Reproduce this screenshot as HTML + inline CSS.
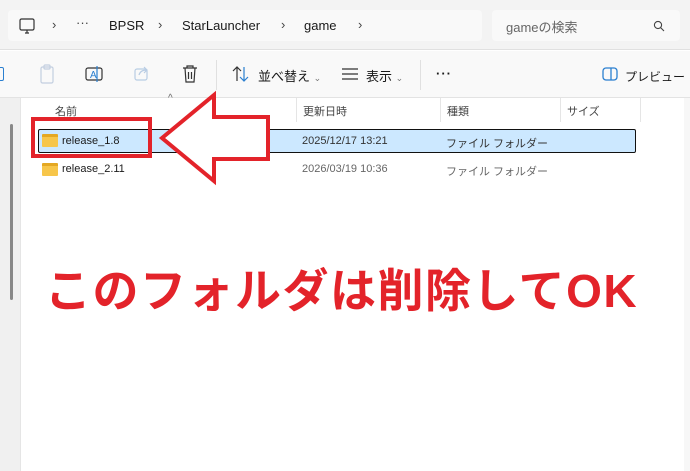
<!DOCTYPE html>
<html><head><meta charset="utf-8"><style>
*{margin:0;padding:0;box-sizing:border-box}
body{width:690px;height:471px;overflow:hidden;background:#fff;font-family:"Liberation Sans","Noto Sans CJK JP",sans-serif;position:relative;color:#1a1a1a}
.abs{position:absolute}
.top{left:0;top:0;width:690px;height:50px;background:#f3f3f3;border-bottom:1px solid #e0e0e0}
.addr{left:8px;top:10px;width:474px;height:31px;background:#f9f9f9;border-radius:4px}
.srch{left:492px;top:10px;width:188px;height:31px;background:#f9f9f9;border-radius:4px}
.tb{left:0;top:51px;width:690px;height:47px;background:#f9f9f9;border-bottom:1px solid #e3e3e3}
.t{font-size:13px;white-space:nowrap}
.s{font-size:11px;white-space:nowrap}
</style></head><body>
<div class="abs top"></div>
<div class="abs addr"></div>
<div class="abs srch"></div>
<svg class="abs" style="left:18px;top:17px" width="18" height="18" viewBox="0 0 18 18" fill="none" stroke="#333" stroke-width="1.2"><rect x="2" y="2" width="14" height="11" rx="1.5"/><path d="M7 16h4M9 13v3"/></svg>
<div class="abs t" style="left:52px;top:17px;color:#444">›</div>
<div class="abs t" style="left:76px;top:15px;color:#444">···</div>
<div class="abs t" style="left:109px;top:18px">BPSR</div>
<div class="abs t" style="left:158px;top:17px;color:#444">›</div>
<div class="abs t" style="left:182px;top:18px">StarLauncher</div>
<div class="abs t" style="left:281px;top:17px;color:#444">›</div>
<div class="abs t" style="left:304px;top:18px">game</div>
<div class="abs t" style="left:358px;top:17px;color:#444">›</div>
<div class="abs t" style="left:506px;top:17px;color:#666">gameの検索</div>
<svg class="abs" style="left:653px;top:20px" width="12" height="12" viewBox="0 0 12 12" fill="none" stroke="#444" stroke-width="1.1"><circle cx="5" cy="5" r="3.6"/><path d="M7.6 7.6L11 11"/></svg>

<div class="abs tb"></div>
<div class="abs" style="left:-6px;top:67px;width:10px;height:14px;border:1.5px solid #2a7fd0;border-radius:2px"></div>
<svg class="abs" style="left:38px;top:64px" width="18" height="20" viewBox="0 0 18 20" fill="none" stroke="#c3cfe0" stroke-width="1.2"><rect x="3" y="3" width="12" height="16" rx="1.5"/><rect x="6" y="1" width="6" height="4" rx="1"/></svg>
<svg class="abs" style="left:84px;top:64px" width="20" height="20" viewBox="0 0 20 20" fill="none" stroke="#333" stroke-width="1.2"><rect x="2" y="4" width="16" height="12" rx="2"/><text x="6" y="14" font-size="10" fill="#2a7fd0" stroke="none" font-family="Liberation Sans">A</text><path d="M13 2v16" stroke="#2a7fd0"/></svg>
<svg class="abs" style="left:133px;top:64px" width="18" height="18" viewBox="0 0 18 18" fill="none" stroke="#b9cde4" stroke-width="1.2"><rect x="2" y="5" width="12" height="11" rx="2"/><path d="M6 11c1-4 4-5 8-5M11 3l3 3-3 3"/></svg>
<svg class="abs" style="left:181px;top:64px" width="18" height="20" viewBox="0 0 18 20" fill="none" stroke="#333" stroke-width="1.2"><path d="M2 4h14M6 4V2h6v2M4 4l1 14h8l1-14M7.5 8v7M10.5 8v7"/></svg>
<div class="abs" style="left:216px;top:60px;width:1px;height:30px;background:#e0e0e0"></div>
<svg class="abs" style="left:232px;top:66px" width="18" height="16" viewBox="0 0 18 16" fill="none" stroke="#333" stroke-width="1.2"><path d="M5 15V1M1 5l4-4 4 4"/><path d="M12 1v14M8 11l4 4 4-4" stroke="#2a7fd0"/></svg>
<div class="abs t" style="left:258px;top:66px">並べ替え <span style="font-size:9px;color:#777">⌄</span></div>
<svg class="abs" style="left:342px;top:68px" width="16" height="12" viewBox="0 0 16 12" stroke="#333" stroke-width="1.2"><path d="M0 1h16M0 6h16M0 11h16"/></svg>
<div class="abs t" style="left:366px;top:66px">表示 <span style="font-size:9px;color:#777">⌄</span></div>
<div class="abs" style="left:420px;top:60px;width:1px;height:30px;background:#e0e0e0"></div>
<div class="abs t" style="left:436px;top:66px;font-weight:bold;letter-spacing:1px">···</div>
<svg class="abs" style="left:602px;top:66px" width="16" height="16" viewBox="0 0 16 16" fill="none" stroke="#2a7fd0" stroke-width="1.3"><rect x="1" y="2" width="14" height="12" rx="3"/><path d="M9 2v12"/></svg>
<div class="abs s" style="left:625px;top:68px;font-size:12px">プレビュー</div>

<div class="abs" style="left:0;top:98px;width:21px;height:373px;background:#f0f0f0;border-right:1px solid #e5e5e5"></div>
<div class="abs" style="left:10px;top:124px;width:3px;height:176px;background:#888;border-radius:2px"></div>
<div class="abs" style="left:684px;top:98px;width:6px;height:373px;background:#f7f7f7"></div>

<div class="abs s" style="left:55px;top:103px;color:#444">名前</div>
<div class="abs s" style="left:168px;top:93px;color:#666;font-size:10px">^</div>
<div class="abs" style="left:296px;top:98px;width:1px;height:24px;background:#e5e5e5"></div>
<div class="abs s" style="left:303px;top:103px;color:#444">更新日時</div>
<div class="abs" style="left:440px;top:98px;width:1px;height:24px;background:#e5e5e5"></div>
<div class="abs s" style="left:447px;top:103px;color:#444">種類</div>
<div class="abs" style="left:560px;top:98px;width:1px;height:24px;background:#e5e5e5"></div>
<div class="abs s" style="left:567px;top:103px;color:#444">サイズ</div>
<div class="abs" style="left:640px;top:98px;width:1px;height:24px;background:#e5e5e5"></div>

<div class="abs" style="left:38px;top:129px;width:598px;height:24px;background:#cce8ff;border:1px solid #111;border-radius:2px"></div>
<div class="abs" style="left:42px;top:134px;width:16px;height:13px;background:#f7c64a;border-radius:1px;border-top:3px solid #e4a823"></div>
<div class="abs s" style="left:62px;top:135px">release_1.8</div>
<div class="abs s" style="left:302px;top:135px;color:#333">2025/12/17 13:21</div>
<div class="abs s" style="left:446px;top:135px;color:#333">ファイル フォルダー</div>
<div class="abs" style="left:42px;top:163px;width:16px;height:13px;background:#f7c64a;border-radius:1px;border-top:3px solid #e4a823"></div>
<div class="abs s" style="left:62px;top:163px">release_2.11</div>
<div class="abs s" style="left:302px;top:163px;color:#666">2026/03/19 10:36</div>
<div class="abs s" style="left:446px;top:163px;color:#666">ファイル フォルダー</div>

<div class="abs" style="left:31px;top:117px;width:121px;height:41px;border:4px solid #e3232a"></div>
<svg class="abs" style="left:0;top:0" width="690" height="471"><polygon points="162,138 214,95 214,117 268,117 268,159 214,159 214,181" fill="#fff" stroke="#e3232a" stroke-width="4" stroke-linejoin="miter"/></svg>

<div class="abs" style="left:45px;top:263px;font-size:46px;font-weight:bold;color:#e3232a;white-space:nowrap;letter-spacing:1.5px;line-height:56px">このフォルダは削除してOK</div>
</body></html>
